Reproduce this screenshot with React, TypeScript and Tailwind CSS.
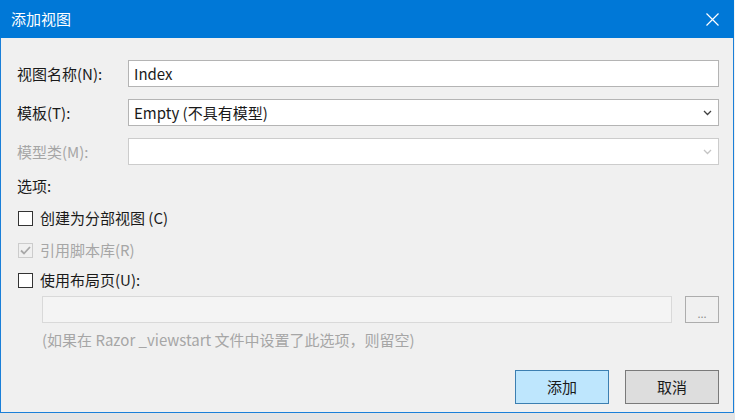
const font = { fontFamily: '"Noto Sans CJK SC", "Noto Sans", sans-serif' }

function Chevron({ disabled }: { disabled?: boolean }) {
  return (
    <svg width="9" height="6" viewBox="0 0 9 6" className="shrink-0">
      <path d="M1 1 L4.5 4.5 L8 1" fill="none" stroke={disabled ? "#c4c4c4" : "#404040"} strokeWidth="1.3" />
    </svg>
  )
}

function Check() {
  return (
    <svg width="11" height="9" viewBox="0 0 11 9">
      <path d="M1 4.5 L4 7.5 L10 1" fill="none" stroke="#a8a8a8" strokeWidth="1.8" />
    </svg>
  )
}

function CloseIcon() {
  return (
    <svg width="13" height="13" viewBox="0 0 13 13">
      <path d="M0.5 0.5 L12.5 12.5 M12.5 0.5 L0.5 12.5" stroke="#fff" strokeWidth="1.2" />
    </svg>
  )
}

export default function App() {
  return (
    <div className="w-[735px] h-[420px] bg-gradient-to-b from-[#f4f4f4] to-[#e4e4e4] overflow-hidden" style={font}>
      <div className="w-[734px] h-[413px] flex flex-col bg-[#f0f0f0] border-x border-b border-[#1a7fd8] text-[15px] leading-[20px] text-[#1a1a1a]">
        <div className="h-[38px] -mx-px bg-[#0078d7] flex items-center justify-between pl-[11px] pr-[15px] text-white shrink-0">
          <span>添加视图</span>
          <CloseIcon />
        </div>

        <div className="flex flex-col pl-[16px] pr-[14px]">
          <div className="flex items-center mt-[22px] h-[27px]">
            <span className="w-[111px]">视图名称(N):</span>
            <div className="flex-1 h-full bg-white border border-[#b4b4b4] flex items-center px-[5px]">Index</div>
          </div>

          <div className="flex items-center mt-[12px] h-[27px]">
            <span className="w-[111px]">模板(T):</span>
            <div className="flex-1 h-full bg-white border border-[#b4b4b4] flex items-center justify-between pl-[5px] pr-[6px]">
              <span>Empty (不具有模型)</span>
              <Chevron />
            </div>
          </div>

          <div className="flex items-center mt-[12px] h-[27px]">
            <span className="w-[111px] text-[#a6a6a6]">模型类(M):</span>
            <div className="flex-1 h-full bg-white border border-[#cccccc] flex items-center justify-end pr-[6px]">
              <Chevron disabled />
            </div>
          </div>

          <div className="mt-[11px] h-[20px]">选项:</div>

          <label className="flex items-center mt-[12px] h-[20px]">
            <span className="w-[15px] h-[15px] ml-px border border-[#333] bg-white" />
            <span className="ml-[7px]">创建为分部视图 (C)</span>
          </label>

          <label className="flex items-center mt-[12px] h-[20px] text-[#a6a6a6]">
            <span className="w-[15px] h-[15px] ml-px border border-[#cccccc] bg-[#f0f0f0] flex items-center justify-center">
              <Check />
            </span>
            <span className="ml-[7px]">引用脚本库(R)</span>
          </label>

          <label className="flex items-center mt-[10px] h-[20px]">
            <span className="w-[15px] h-[15px] ml-px border border-[#333] bg-white" />
            <span className="ml-[7px]">使用布局页(U):</span>
          </label>

          <div className="flex items-center mt-[6px] h-[27px] pl-[25px]">
            <div className="flex-1 h-full bg-[#f4f4f4] border border-[#d9d9d9]" />
            <div className="w-[34px] h-full ml-[13px] border border-[#adadad] bg-[#f0f0f0] flex items-end justify-center pb-[3px] text-[11px] leading-[12px] text-[#8c8c8c]">...</div>
          </div>

          <div className="mt-[7px] h-[20px] pl-[25px] text-[#a6a6a6]">(如果在 Razor _viewstart 文件中设置了此选项，则留空)</div>

          <div className="flex justify-end gap-[16px] mt-[20px]">
            <button className="w-[94px] h-[34px] bg-[#bee6fd] border border-[#3c7fb1]">添加</button>
            <button className="w-[94px] h-[34px] bg-[#dddddd] border border-[#7a7a7a]">取消</button>
          </div>
        </div>
      </div>
    </div>
  )
}
